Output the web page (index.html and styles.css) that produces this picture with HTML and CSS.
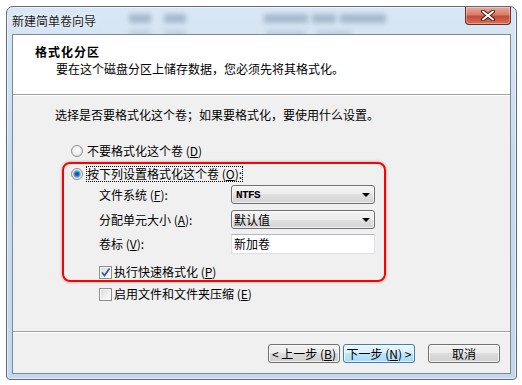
FILE: index.html
```html
<!DOCTYPE html>
<html>
  <head>
    <meta charset="utf-8">
    <title>新建简单卷向导</title>
    <link rel="stylesheet" href="styles.css">
  </head>
  <body>
    <div class="window">
      <div class="titlebar">
        <span class="blur b1"></span>
        <span class="blur b2"></span>
        <span class="blur b3"></span>
        <span class="blur b4"></span>
        <span class="blur b5"></span>
        <span class="blur low b6"></span>
        <span class="blur low b7"></span>
        <span class="blur low b8"></span>
        <span class="blur low b9"></span>
        <span class="title">新建简单卷向导</span>
        <div class="close">
          <svg width="16" height="11" viewBox="0 0 16 11">
            <path d="M3 1.5 L13 9.5 M13 1.5 L3 9.5" stroke="#4b1d17" stroke-width="4" stroke-linecap="round"/>
            <path d="M3 1.5 L13 9.5 M13 1.5 L3 9.5" stroke="#ffffff" stroke-width="2" stroke-linecap="round"/>
          </svg>
        </div>
      </div>
      <div class="client">
        <div class="header">
          <div class="header-title">格式化分区</div>
          <div class="header-sub">要在这个磁盘分区上储存数据，您必须先将其格式化。</div>
        </div>
        <div class="content">
          <div class="intro">选择是否要格式化这个卷；如果要格式化，要使用什么设置。</div>
          <div class="option first">
            <span class="radio"></span>
            <span>不要格式化这个卷 (<u>D</u>)</span>
          </div>
          <div class="group">
            <div class="option">
              <span class="radio checked"></span>
              <span class="focus">按下列设置格式化这个卷 (<u>O</u>):</span>
            </div>
            <div class="field f1">
              <label>文件系统 (<u>F</u>):</label>
              <div class="combo"><span class="mono">NTFS</span><span class="arrow"></span></div>
            </div>
            <div class="field f2">
              <label>分配单元大小 (<u>A</u>):</label>
              <div class="combo"><span>默认值</span><span class="arrow"></span></div>
            </div>
            <div class="field f3">
              <label>卷标 (<u>V</u>):</label>
              <div class="textbox">新加卷</div>
            </div>
            <div class="check-row quick">
              <span class="checkbox">
                <svg width="11" height="11" viewBox="0 0 11 11">
                  <path d="M2 5.5 L4.5 8.5 L9.5 1.5" fill="none" stroke="#3a55a4" stroke-width="1.8"/>
                </svg>
              </span>
              <span>执行快速格式化 (<u>P</u>)</span>
            </div>
          </div>
          <div class="check-row compress">
            <span class="checkbox"></span>
            <span>启用文件和文件夹压缩 (<u>E</u>)</span>
          </div>
        </div>
        <div class="footer">
          <button class="btn">&lt;&nbsp;上一步 (<u>B</u>)</button>
          <button class="btn default">下一步 (<u>N</u>)&nbsp;&gt;</button>
          <button class="btn cancel">取消</button>
        </div>
      </div>
    </div>
  </body>
</html>
```

FILE: styles.css
```css
body {
  margin: 0;
  background-color: #ffffff;
  font-family: "Noto Sans CJK SC", "Liberation Sans", sans-serif;
  font-size: 12px;
  color: #000000;
}

u {
  text-decoration: underline;
  text-underline-offset: 1px;
}

/* window frame */
.window {
  position: relative;
  margin: 6px 0 0 6px;
  width: 511px;
  height: 374px;
  box-sizing: border-box;
  border: 1px solid #5d6b7b;
  border-radius: 7px 7px 4px 4px;
  background: linear-gradient(to bottom, #d9e7f5 0%, #c6dbef 40%, #c3d8ed 100%);
  box-shadow: inset 0 0 0 1px rgba(255, 255, 255, 0.55);
  padding: 0 5px 5px 5px;
  display: flex;
  flex-direction: column;
}

.titlebar {
  position: relative;
  height: 27px;
  display: flex;
  align-items: flex-start;
}

.title {
  margin-top: 6px;
  line-height: 16px;
  color: #1b1b1b;
  text-shadow: 0 0 6px rgba(255, 255, 255, 0.9);
  position: relative;
}

/* blurred glass behind the title bar */
.blur {
  position: absolute;
  top: 7px;
  height: 9px;
  background-color: #7f95ab;
  filter: blur(2.5px);
  opacity: 0.55;
}
.blur.low {
  top: 24px;
  height: 5px;
  opacity: 0.35;
}
.b1 { left: 117px; width: 22px; }
.b2 { left: 152px; width: 22px; }
.b3 { left: 252px; width: 44px; }
.b4 { left: 300px; width: 24px; }
.b5 { left: 328px; width: 46px; }
.b6 { left: 117px; width: 22px; }
.b7 { left: 152px; width: 22px; }
.b8 { left: 254px; width: 40px; }
.b9 { left: 304px; width: 36px; }

.close {
  position: relative;
  margin-left: auto;
  width: 46px;
  height: 18px;
  box-sizing: border-box;
  border: 1px solid #6b2c22;
  border-top: none;
  border-radius: 0 0 4px 4px;
  background: linear-gradient(to bottom, #e9a99b 0%, #d87d6b 45%, #c74a37 55%, #d6705c 100%);
  box-shadow: inset 0 0 0 1px rgba(255, 255, 255, 0.35);
  display: flex;
  align-items: center;
  justify-content: center;
}

/* client area */
.client {
  position: relative;
  flex: 1;
  border: 1px solid #7b8a9b;
  background-color: #f0f0f0;
  display: flex;
  flex-direction: column;
}

.header {
  height: 60px;
  box-sizing: border-box;
  background-color: #ffffff;
  border-bottom: 1px solid #a0a0a0;
  padding: 9px 0 0 22px;
}

.header-title {
  font-weight: bold;
  line-height: 16px;
  letter-spacing: 1px;
}

.header-sub {
  margin-top: 1px;
  padding-left: 21px;
  line-height: 16px;
}

.content {
  flex: 1;
  padding: 12px 0 0 42px;
  border-top: 1px solid #ffffff;
}

.intro {
  line-height: 16px;
  margin-top: -1px;
}

.option {
  display: flex;
  align-items: center;
  gap: 4px;
  height: 16px;
  line-height: 16px;
}

.option.first {
  margin: 20px 0 0 16px;
}

.radio {
  flex: none;
  width: 12px;
  height: 12px;
  box-sizing: border-box;
  border-radius: 50%;
  border: 1px solid #8c8f92;
  background: radial-gradient(circle at 50% 40%, #ffffff 0%, #eeeeee 55%, #cfd1d3 100%);
}

.radio.checked {
  background: radial-gradient(circle at 50% 50%, #103f7c 0px, #2a6fc0 2px, #7fb5e6 3.4px, #f2f2f2 4.4px, #d8d8d8 100%);
}

.focus {
  margin-left: -1px;
  border: 1px dotted #000000;
  line-height: 14px;
}

/* red highlight */
.group {
  margin: 3px 0 0 7px;
  width: 324px;
  box-sizing: border-box;
  border: 2px solid #ff0000;
  border-radius: 8px;
  box-shadow: 0 0 3px rgba(0, 0, 0, 0.35);
  padding: 2px 0 1px 7px;
}

.field {
  display: flex;
  align-items: center;
  margin-left: 28px;
}
.field.f1 { margin-top: 3px; }
.field.f2 { margin-top: 6px; }
.field.f3 { margin-top: 5px; }

.field label {
  width: 132px;
  line-height: 16px;
}

.combo {
  width: 144px;
  height: 19px;
  box-sizing: border-box;
  border: 1px solid #707070;
  border-radius: 3px;
  background: linear-gradient(to bottom, #f4f4f4 0%, #ececec 50%, #e0e0e0 50%, #d4d4d4 100%);
  box-shadow: inset 0 0 0 1px rgba(255, 255, 255, 0.6);
  display: flex;
  align-items: center;
  padding: 0 4px 0 2px;
  line-height: 16px;
}

.mono {
  font-family: "Liberation Mono", monospace;
  font-size: 11px;
  font-weight: bold;
  letter-spacing: -0.6px;
  padding-left: 2px;
}

.arrow {
  margin-left: auto;
  width: 0;
  height: 0;
  border-left: 4px solid transparent;
  border-right: 4px solid transparent;
  border-top: 4px solid #000000;
}

.textbox {
  width: 144px;
  height: 20px;
  box-sizing: border-box;
  border: 1px solid #dcdfe3;
  border-top-color: #b5b9bf;
  background-color: #ffffff;
  padding-left: 2px;
  line-height: 18px;
}

.check-row {
  display: flex;
  align-items: center;
  gap: 2px;
  height: 14px;
  line-height: 14px;
}

.check-row.quick {
  margin: 11px 0 0 28px;
}

.check-row.compress {
  margin: 5px 0 0 44px;
}

.checkbox {
  flex: none;
  width: 13px;
  height: 13px;
  box-sizing: border-box;
  border: 1px solid #8e8f8f;
  background: linear-gradient(135deg, #d9dadb 0%, #f0f0f0 60%, #ffffff 100%);
  box-shadow: inset 0 0 0 1px #f6f6f6;
  display: flex;
  align-items: center;
  justify-content: center;
}

/* buttons */
.footer {
  height: 42px;
  box-sizing: border-box;
  border-top: 1px solid #a0a0a0;
  box-shadow: inset 0 1px 0 #ffffff;
  display: flex;
  justify-content: flex-end;
  align-items: flex-start;
  padding: 12px 10px 0 0;
}

.btn {
  width: 72px;
  height: 19px;
  box-sizing: border-box;
  padding: 0;
  margin: 0 0 0 3px;
  border: 1px solid #707070;
  border-radius: 3px;
  background: linear-gradient(to bottom, #f2f2f2 0%, #ebebeb 50%, #dddddd 50%, #cfcfcf 100%);
  box-shadow: inset 0 0 0 1px rgba(255, 255, 255, 0.7);
  font-family: "Noto Sans CJK SC", "Liberation Sans", sans-serif;
  font-size: 12px;
  line-height: 16px;
  color: #000000;
  white-space: nowrap;
}

.btn.default {
  border-color: #3c7fb1;
  background: linear-gradient(to bottom, #eaf6fd 0%, #d9f0fc 50%, #bee6fd 50%, #a7d9f5 100%);
}

.btn.cancel {
  margin-left: 13px;
}
```
